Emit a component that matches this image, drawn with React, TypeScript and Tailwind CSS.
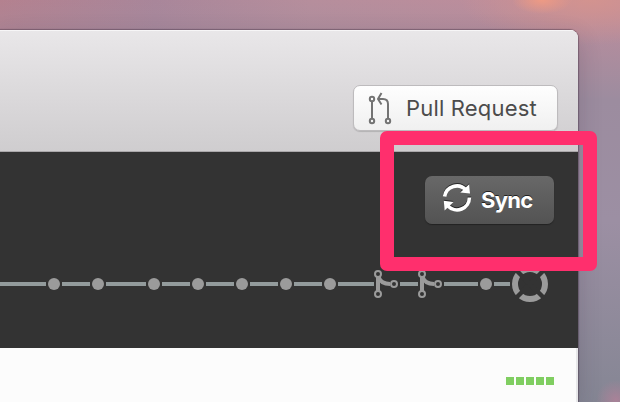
import React from "react";

const dots = [54, 98, 154, 198, 242, 286, 330, 486];
const links = [
  [0, 46], [62, 90], [106, 146], [162, 190], [206, 234], [250, 278],
  [294, 322], [338, 374], [400, 418], [444, 478], [494, 510],
];
const merges = [378, 422];

function PullRequestIcon() {
  return (
    <svg className="h-9 w-6 shrink-0" viewBox="0 0 24 36" fill="none" stroke="#737373" strokeWidth="2">
      <circle cx="4" cy="9" r="2.2" />
      <circle cx="4" cy="31" r="2.2" />
      <circle cx="20" cy="31" r="2.2" />
      <path d="M4 11.3V28.7M20 28.7V14Q20 9 15 9H10.5M13.5 3L10 9L13.5 14.5" />
    </svg>
  );
}

function SyncIcon() {
  return (
    <svg className="-mt-1 h-8 w-8 shrink-0 drop-shadow-[0_-1px_0_rgba(0,0,0,0.6)]" viewBox="0 0 32 32" fill="none">
      <path d="M3.6 14.5A12.4 12.4 0 0 1 25 8M28.4 15.5A12.4 12.4 0 0 1 7 24" stroke="white" strokeWidth="3.6" />
      <path d="M28.2 2.3L29 11.6L19.3 10.4ZM2.8 18.8L12.5 20L3.6 28.5Z" fill="white" />
    </svg>
  );
}

function Timeline() {
  return (
    <svg className="block h-[52px] w-full" viewBox="0 258 578 52" fill="none">
      {links.map(([a, b]) => (
        <path key={a} d={`M${a} 284H${b}`} stroke="#939b9c" strokeWidth="4" />
      ))}
      {dots.map((x) => (
        <circle key={x} cx={x} cy="284" r="6" fill="#9b9b9b" />
      ))}
      {merges.map((x) => (
        <g key={x} transform={`translate(${x} 284)`} stroke="#9b9b9b">
          <path d="M0 -7V7" strokeWidth="4" />
          <path d="M0.5 -7Q3 0 12 0" strokeWidth="4" />
          <g fill="#333" strokeWidth="2">
            <circle cy="-10" r="3" />
            <circle cy="10" r="3" />
            <circle cx="16" r="3" />
          </g>
        </g>
      ))}
      <circle cx="530" cy="284" r="15" stroke="#9b9b9b" strokeWidth="6" />
      <path d="M516 270L544 298M544 270L516 298" stroke="#333" strokeWidth="4.5" />
    </svg>
  );
}

export default function App() {
  return (
    <div className="relative h-[402px] w-[620px] overflow-hidden bg-[radial-gradient(circle_at_616px_400px,#a98298_0,#a9829800_20px),radial-gradient(ellipse_30px_14px_at_542px_0px,#ee9a84_0,#ee9a8400_100%),radial-gradient(ellipse_130px_45px_at_590px_0px,#d3938f_0,#d3938f00_100%),linear-gradient(180deg,#b8899a00_0,#9c8c9f_25%,#9c8fa3_55%,#858694_100%),linear-gradient(90deg,#b4818f_0,#a9869a_25%,#b68e9c_50%,#c08d9c_100%)] pt-[30px] font-['Inter',sans-serif]">
      <main className="h-[372px] w-[578px] overflow-hidden rounded-tr-lg bg-[#fcfcfc] shadow-[0_0_1px_1px_rgba(60,40,60,0.4),0_8px_24px_rgba(40,30,50,0.2)]">
        <header className="flex h-[122px] items-start justify-end border-b border-[#aaa8aa] bg-linear-to-b from-[#e9e7e9] to-[#cfcdcf] pt-[55px] pr-5 shadow-[inset_0_1px_0_#f7f6f7]">
          <button className="flex h-[46px] w-[205px] items-center rounded-[7px] border border-[#bdbbbd] bg-linear-to-b from-[#fefefe] to-[#f0f0f0] pl-[14px] shadow-[0_1px_1px_rgba(0,0,0,0.15)]">
            <PullRequestIcon />
            <span className="ml-[14px] text-[22px] tracking-[0.18px] whitespace-nowrap text-[#4c4c4c]">Pull Request</span>
          </button>
        </header>
        <section className="h-[196px] bg-[#333]">
          <div className="flex h-[106px] justify-end pt-6 pr-6">
            <button className="flex h-12 w-[129px] items-center rounded-[7px] bg-linear-to-b from-[#686868] to-[#535353] pl-4 shadow-[0_1px_1px_#222]">
              <SyncIcon />
              <span className="ml-2 text-[22px] font-bold tracking-[-0.7px] text-white [text-shadow:0_-1px_0_#222]">Sync</span>
            </button>
          </div>
          <Timeline />
        </section>
        <section className="flex h-[54px] justify-end border-r-2 border-[#e7e7e9] pt-[29px] pr-[22px]">
          <div className="flex gap-0.5">
            {[0, 1, 2, 3, 4].map((i) => (
              <i key={i} className="size-2 bg-[#80ce61]" />
            ))}
          </div>
        </section>
      </main>
      <div className="absolute top-[131px] left-[380px] h-[140px] w-[217px] rounded-[7px] border-14 border-[#ff2f6d]" />
    </div>
  );
}
